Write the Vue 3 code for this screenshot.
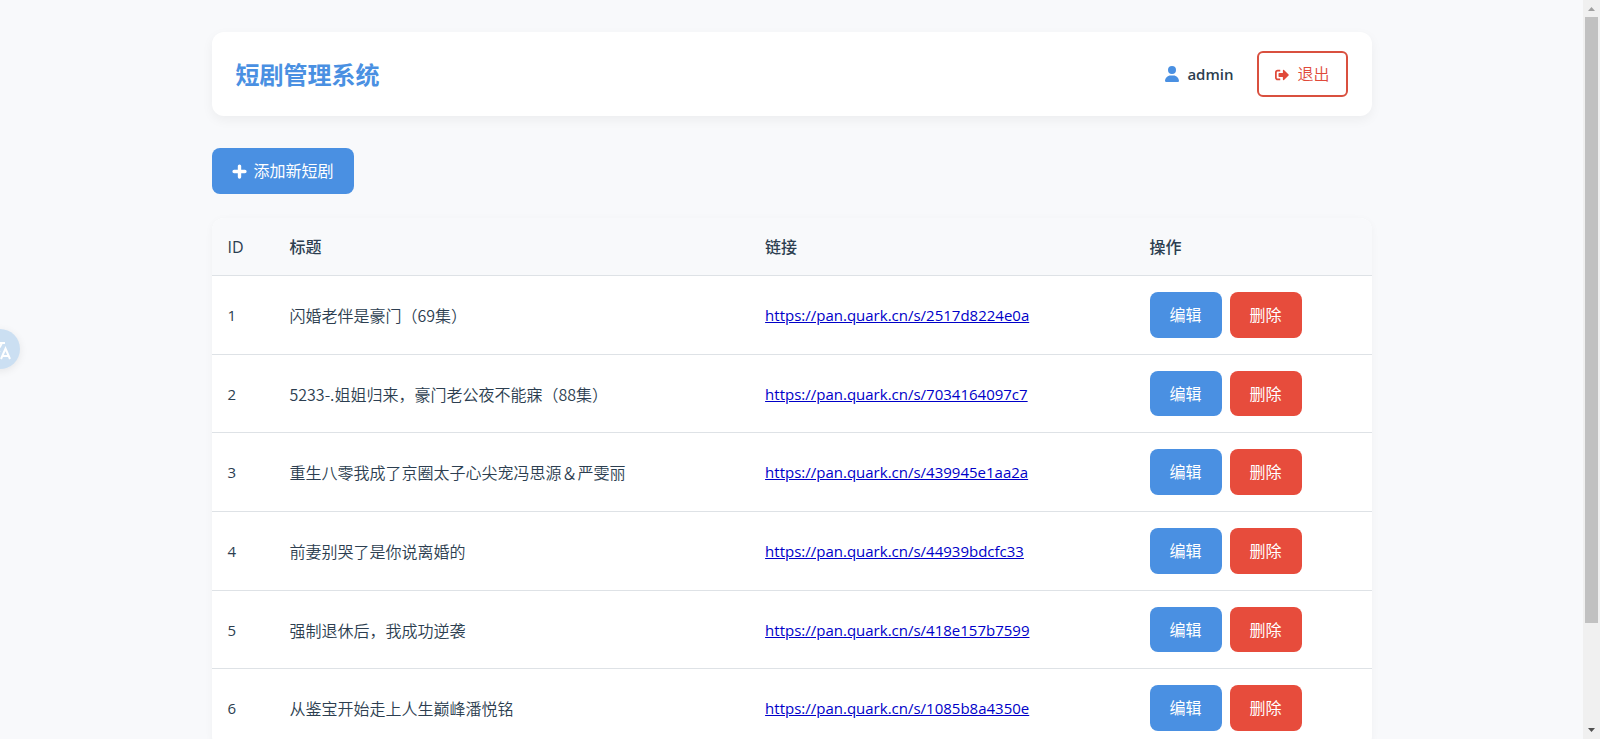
<script setup>
const dramas = [
  { id: 1, title: '闪婚老伴是豪门（69集）', url: 'https://pan.quark.cn/s/2517d8224e0a' },
  { id: 2, title: '5233-.姐姐归来，豪门老公夜不能寐（88集）', url: 'https://pan.quark.cn/s/7034164097c7' },
  { id: 3, title: '重生八零我成了京圈太子心尖宠冯思源＆严雯丽', url: 'https://pan.quark.cn/s/439945e1aa2a' },
  { id: 4, title: '前妻别哭了是你说离婚的', url: 'https://pan.quark.cn/s/44939bdcfc33' },
  { id: 5, title: '强制退休后，我成功逆袭', url: 'https://pan.quark.cn/s/418e157b7599' },
  { id: 6, title: '从鉴宝开始走上人生巅峰潘悦铭', url: 'https://pan.quark.cn/s/1085b8a4350e' },
]
</script>

<template>
  <div class="page">
    <div class="container">
      <header class="header">
        <h1>短剧管理系统</h1>
        <div class="user">
          <span class="user-name">
            <svg class="user-icon" viewBox="0 0 448 512" aria-hidden="true"><path fill="currentColor" d="M224 256A128 128 0 1 0 224 0a128 128 0 1 0 0 256zm-45.700 48C79.800 304 0 383.800 0 482.300C0 498.700 13.300 512 29.700 512H418.300c16.400 0 29.700-13.300 29.700-29.700C448 383.800 368.200 304 269.700 304H178.300z" /></svg>
            <span>admin</span>
          </span>
          <button type="button" class="logout">
            <svg class="logout-icon" viewBox="0 0 512 512" aria-hidden="true"><path fill="currentColor" d="M497 273L329 441c-15 15-41 4.500-41-17v-96H152c-13.300 0-24-10.700-24-24v-96c0-13.300 10.700-24 24-24h136V88c0-21.400 25.900-32 41-17l168 168c9.300 9.400 9.300 24.600 0 34zM192 436v-40c0-6.600-5.400-12-12-12H96c-17.700 0-32-14.300-32-32V160c0-17.700 14.300-32 32-32h84c6.600 0 12-5.400 12-12V76c0-6.600-5.400-12-12-12H96c-53 0-96 43-96 96v192c0 53 43 96 96 96h84c6.600 0 12-5.400 12-12z" /></svg>
            <span>退出</span>
          </button>
        </div>
      </header>

      <main>
        <button type="button" class="btn primary add">
          <svg class="plus-icon" viewBox="0 0 16 16" aria-hidden="true"><path d="M8 2.200v11.600M2.200 8h11.600" fill="none" stroke="currentColor" stroke-width="3.600" stroke-linecap="round" /></svg>
          <span>添加新短剧</span>
        </button>

        <table class="table">
          <colgroup>
            <col class="col-id" />
            <col class="col-title" />
            <col />
            <col class="col-actions" />
          </colgroup>
          <thead>
            <tr>
              <th scope="col">ID</th>
              <th scope="col">标题</th>
              <th scope="col">链接</th>
              <th scope="col">操作</th>
            </tr>
          </thead>
          <tbody>
            <tr v-for="drama in dramas" :key="drama.id">
              <td><span class="latin">{{ drama.id }}</span></td>
              <td class="title-cell">{{ drama.title }}</td>
              <td><a class="latin" :href="drama.url">{{ drama.url }}</a></td>
              <td class="actions-cell">
                <div class="actions">
                  <button type="button" class="btn primary">编辑</button>
                  <button type="button" class="btn danger">删除</button>
                </div>
              </td>
            </tr>
          </tbody>
        </table>
      </main>
    </div>

    <button type="button" class="translate" aria-label="翻译">
      <svg viewBox="0 0 40 40" aria-hidden="true">
        <path d="M10 14h15M17 11v3M22 14c-2 5-5 8-10 11M14 17c2 3 3 4 6 6M21 30l4.500-10.500L30 30M22.500 27h6" fill="none" stroke="currentColor" stroke-width="2" />
      </svg>
    </button>

    <div class="scrollbar" aria-hidden="true">
      <svg class="arrow up" viewBox="0 0 17 17"><path fill="currentColor" d="M5 11h7L8.500 7z" /></svg>
      <div class="track"><div class="thumb"></div></div>
      <svg class="arrow down" viewBox="0 0 17 17"><path fill="currentColor" d="M5 6h7L8.500 10z" /></svg>
    </div>
  </div>
</template>

<style>
body {
  margin: 0;
  background: #f8f9fb;
}
</style>

<style scoped>
.page {
  box-sizing: border-box;
  height: 100vh;
  overflow: hidden;
  padding-right: 17px;
  background: #f8f9fb;
  color: #2c3e50;
  font-family: "Open Sans", "Noto Sans CJK SC", sans-serif;
  font-size: 16px;
  line-height: 1.6;
}
.container {
  box-sizing: border-box;
  max-width: 1200px;
  margin: 0 auto;
  padding: 32px 20px;
}
.header {
  box-sizing: border-box;
  display: flex;
  align-items: center;
  justify-content: space-between;
  min-height: 84px;
  margin-bottom: 32px;
  padding: 16px 24px;
  border-radius: 12px;
  background: #fff;
  box-shadow: 0 4px 12px rgba(0, 0, 0, 0.05);
}
h1 {
  margin: 0;
  padding-top: 2px;
  color: #4a90e2;
  font-size: 24px;
  font-weight: 700;
}
.user {
  display: flex;
  align-items: center;
  gap: 24px;
}
.user-name {
  display: flex;
  align-items: center;
  gap: 8px;
  font-size: 15px;
  font-weight: 600;
}
.user-icon {
  width: 14px;
  height: 16px;
  color: #4a90e2;
}
button {
  border: 0;
  font: inherit;
  cursor: pointer;
}
.logout {
  display: flex;
  align-items: center;
  gap: 8px;
  padding: 9px 16px 7px;
  border: 2px solid #d9503f;
  border-radius: 6px;
  background: transparent;
  color: #e04a3a;
  font-weight: 350;
}
.logout-icon {
  width: 14px;
  height: 14px;
}
.btn {
  padding: 11px 20px 9px;
  border-radius: 8px;
  color: #fff;
}
.primary {
  background: #4a90e2;
}
.danger {
  background: #e74c3c;
}
.add {
  display: flex;
  align-items: center;
  gap: 7px;
  margin-bottom: 24px;
}
.plus-icon {
  width: 15px;
  height: 15px;
}
.table {
  width: 100%;
  table-layout: fixed;
  border-collapse: separate;
  border-spacing: 0;
  border-radius: 12px;
  overflow: hidden;
  background: #fff;
  box-shadow: 0 2px 8px rgba(0, 0, 0, 0.04);
}
.col-id {
  width: 62px;
}
.col-title {
  width: 41%;
}
.col-actions {
  width: 238px;
}
th,
td {
  padding: 17px 16px 15px;
  border-bottom: 1px solid #dee2e6;
  text-align: left;
  vertical-align: middle;
}
th {
  background: #f8f9fb;
  font-weight: 500;
}
td {
  font-weight: 350;
}
.title-cell {
  font-family: "Noto Sans CJK SC", sans-serif;
}
.actions-cell {
  padding: 16px;
}
.latin {
  font-size: 15px;
  font-weight: 400;
}
a {
  color: #0000c8;
}
.actions {
  display: flex;
  gap: 8px;
}
.actions .btn {
  font-weight: 400;
}
.translate {
  position: fixed;
  top: 329px;
  left: -20px;
  width: 40px;
  height: 40px;
  padding: 0;
  border-radius: 50%;
  background: #cbdff2;
  color: #fff;
  box-shadow: 0 2px 8px rgba(0, 0, 0, 0.08);
}
.translate svg {
  display: block;
}
.scrollbar {
  position: fixed;
  top: 0;
  right: 0;
  bottom: 0;
  display: flex;
  flex-direction: column;
  width: 17px;
  background: #f0f0f0;
}
.arrow {
  width: 17px;
  height: 17px;
}
.up {
  color: #a0a0a0;
}
.down {
  color: #505050;
}
.track {
  flex: 1;
  padding: 0 2px;
}
.thumb {
  height: 86%;
  background: #c1c1c1;
}
</style>
